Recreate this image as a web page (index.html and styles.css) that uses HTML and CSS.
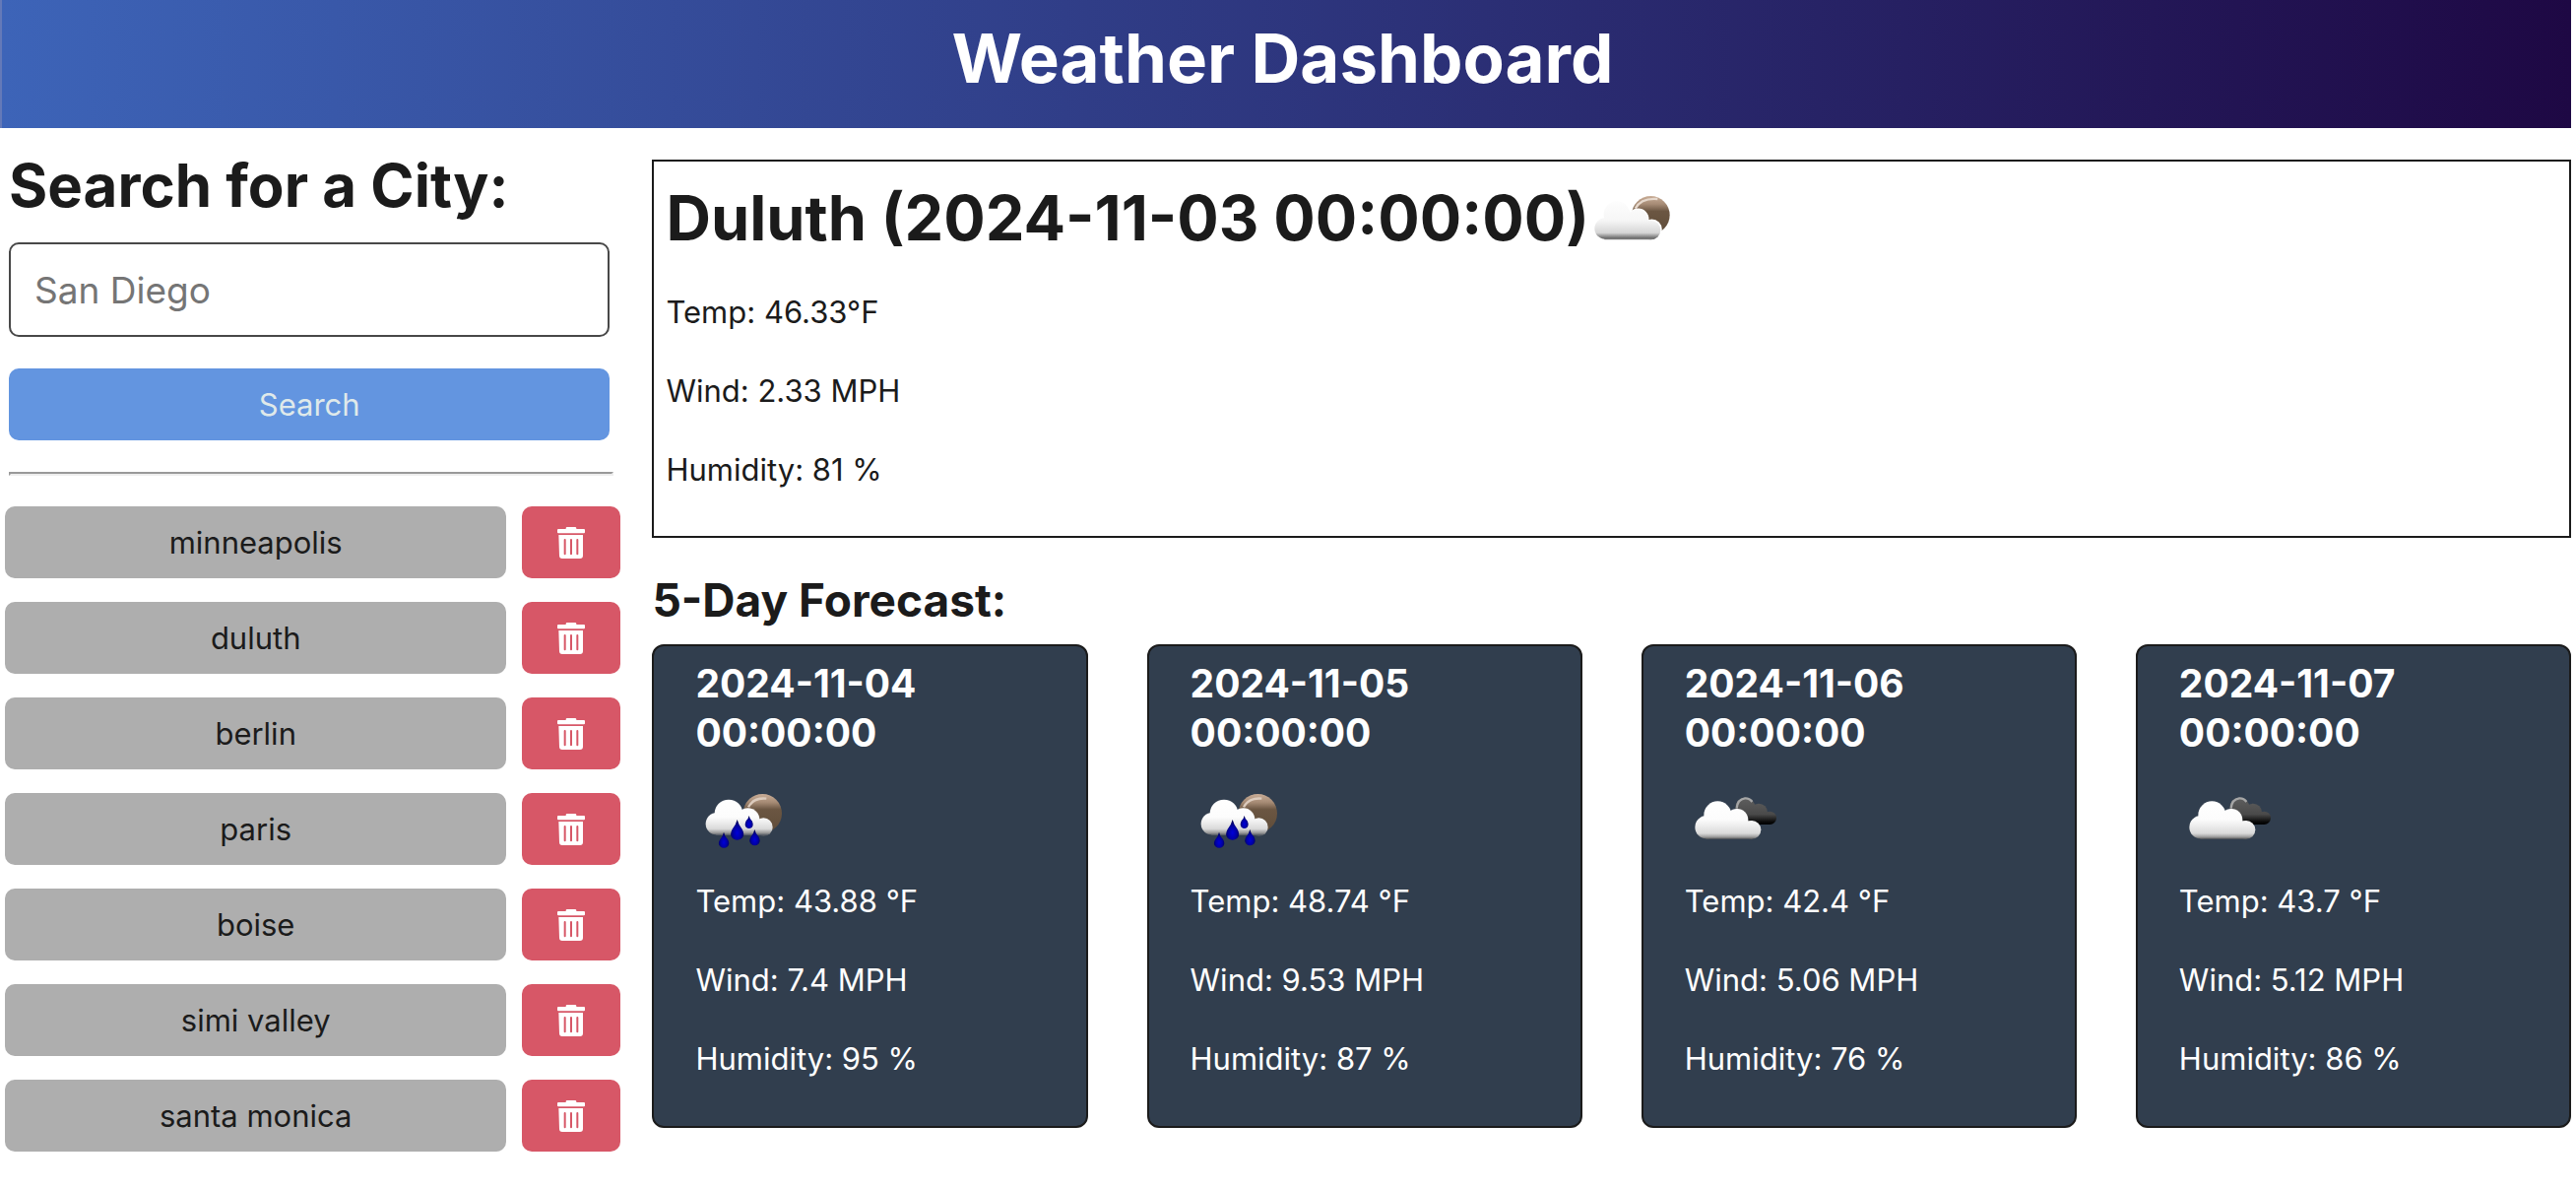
FILE: index.html
```html
<!DOCTYPE html>
<html lang="en">
<head>
<meta charset="utf-8">
<meta name="viewport" content="width=device-width, initial-scale=1">
<title>Weather Dashboard</title>
<link rel="stylesheet" href="styles.css">
</head>
<body>
<svg class="sprite" width="0" height="0" aria-hidden="true">
  <defs>
    <linearGradient id="cloud-fill" gradientUnits="userSpaceOnUse" x1="0" y1="96" x2="0" y2="216">
      <stop offset="0" stop-color="#fff"/><stop offset=".5" stop-color="#fcfcfc"/><stop offset=".85" stop-color="#dadada"/><stop offset=".93" stop-color="#a5a5a5"/><stop offset="1" stop-color="#555"/>
    </linearGradient>
    <linearGradient id="low-cloud-fill" gradientUnits="userSpaceOnUse" x1="0" y1="130" x2="0" y2="247">
      <stop offset="0" stop-color="#fdfdfd"/><stop offset=".5" stop-color="#f6f6f6"/><stop offset=".82" stop-color="#d6d6d6"/><stop offset=".9" stop-color="#999"/><stop offset=".97" stop-color="#666"/><stop offset="1" stop-color="#aaa"/>
    </linearGradient>
    <linearGradient id="rain-cloud-fill" gradientUnits="userSpaceOnUse" x1="0" y1="94" x2="0" y2="204">
      <stop offset="0" stop-color="#fff"/><stop offset=".5" stop-color="#fcfcfc"/><stop offset=".82" stop-color="#dadada"/><stop offset=".93" stop-color="#999"/><stop offset="1" stop-color="#4d545e"/>
    </linearGradient>
    <linearGradient id="moon-fill" x1="0" y1="0" x2="0" y2="1">
      <stop offset="0" stop-color="#c9ad97"/><stop offset=".22" stop-color="#a58a74"/><stop offset=".4" stop-color="#6b5642"/><stop offset="1" stop-color="#5f4c39"/>
    </linearGradient>
    <linearGradient id="dark-fill" gradientUnits="userSpaceOnUse" x1="0" y1="95" x2="0" y2="170">
      <stop offset="0" stop-color="#5c5c5c"/><stop offset=".6" stop-color="#4a4a4a"/><stop offset=".9" stop-color="#0a0a0a"/><stop offset="1" stop-color="#000"/>
    </linearGradient>
    <radialGradient id="drop-fill" cx=".5" cy=".65" r=".6">
      <stop offset="0" stop-color="#0000d8"/><stop offset=".5" stop-color="#0000a8"/><stop offset="1" stop-color="#00004c"/>
    </radialGradient>
  </defs>
  <symbol id="trash" viewBox="137 105 84 96">
    <path fill="#fff" fill-rule="evenodd" d="M140 111h23v-2q0-4 4-4h24q4 0 4 4v2h23q3 0 3 3v7q0 3-3 3h-78q-3 0-3-3v-7q0-3 3-3zM141 129h74v63q0 9-9 9h-54q-9 0-9-9zM157 144v43q0 3 3 3t3-3v-43q0-3-3-3t-3 3zM176 144v43q0 3 3 3t3-3v-43q0-3-3-3t-3 3zM195 144v43q0 3 3 3t3-3v-43q0-3-3-3t-3 3z"/>
  </symbol>
  <symbol id="few-clouds" viewBox="24 60 300 240">
    <circle cx="229" cy="172" r="58" fill="url(#moon-fill)"/>
    <path d="M182 152Q200 119 250 123" fill="none" stroke="#e6d8cc" stroke-width="7"/>
    <g fill="#fff" stroke="#fff" stroke-width="7">
      <circle cx="191" cy="184" r="29"/><circle cx="232" cy="216" r="28"/>
    </g>
    <g fill="url(#low-cloud-fill)">
      <circle cx="90" cy="213" r="32"/><circle cx="126" cy="170" r="40"/><circle cx="188" cy="187" r="32"/><circle cx="230" cy="218" r="29"/>
      <rect x="88" y="187" width="144" height="60"/>
    </g>
  </symbol>
  <symbol id="rain" viewBox="51 0 300 300">
    <circle cx="256" cy="137" r="59" fill="url(#moon-fill)"/>
    <path d="M213 118Q228 88 268 92" fill="none" stroke="#dccbbd" stroke-width="7"/>
    <g fill="url(#rain-cloud-fill)">
      <circle cx="117" cy="169" r="34"/><circle cx="153" cy="138" r="43"/><circle cx="212" cy="156" r="35"/><circle cx="259" cy="179" r="28"/>
      <rect x="115" y="160" width="144" height="44"/>
    </g>
    <g fill="url(#drop-fill)">
      <path d="M215 144Q217 154 224 160Q230 172 224 179Q215 187 206 179Q200 172 206 160Q213 154 215 144z"/>
      <path d="M179 156Q183 172 194 185Q204 202 193 213Q179 223 165 213Q154 202 164 185Q175 172 179 156z"/>
      <path d="M138 194Q141 207 150 216Q158 229 150 238Q138 247 127 238Q118 229 127 216Q135 207 138 194z"/>
      <path d="M232 186Q235 199 244 208Q252 221 244 230Q232 239 221 230Q212 221 221 208Q229 199 232 186z"/>
    </g>
  </symbol>
  <symbol id="broken-clouds" viewBox="33 0 300 300">
    <g fill="url(#dark-fill)">
      <circle cx="217" cy="119" r="30"/><circle cx="258" cy="134" r="27"/><circle cx="292" cy="151" r="20"/>
      <rect x="205" y="134" width="88" height="37"/>
    </g>
    <path d="M191 122Q193 94 216 91Q230 90 238 102" fill="none" stroke="#a6a6a6" stroke-width="7"/>
    <g fill="url(#cloud-fill)">
      <circle cx="99" cy="179" r="35"/><circle cx="133" cy="142" r="42"/><circle cx="192" cy="157" r="34"/><circle cx="237" cy="187" r="28"/>
      <rect x="97" y="160" width="141" height="55"/>
    </g>
  </symbol>
</svg>

<header class="banner"><h1>Weather Dashboard</h1></header>

<div class="page">
  <aside class="sidebar">
    <form class="search">
      <h2><label for="city">Search for a City:</label></h2>
      <input id="city" type="text" placeholder="San Diego">
      <button type="submit" class="btn btn-search">Search</button>
    </form>
    <hr>
    <ul class="history">
      <li><button type="button" class="btn btn-city">minneapolis</button><button type="button" class="btn btn-delete" aria-label="Delete minneapolis"><svg><use href="#trash"/></svg></button></li>
      <li><button type="button" class="btn btn-city">duluth</button><button type="button" class="btn btn-delete" aria-label="Delete duluth"><svg><use href="#trash"/></svg></button></li>
      <li><button type="button" class="btn btn-city">berlin</button><button type="button" class="btn btn-delete" aria-label="Delete berlin"><svg><use href="#trash"/></svg></button></li>
      <li><button type="button" class="btn btn-city">paris</button><button type="button" class="btn btn-delete" aria-label="Delete paris"><svg><use href="#trash"/></svg></button></li>
      <li><button type="button" class="btn btn-city">boise</button><button type="button" class="btn btn-delete" aria-label="Delete boise"><svg><use href="#trash"/></svg></button></li>
      <li><button type="button" class="btn btn-city">simi valley</button><button type="button" class="btn btn-delete" aria-label="Delete simi valley"><svg><use href="#trash"/></svg></button></li>
      <li><button type="button" class="btn btn-city">santa monica</button><button type="button" class="btn btn-delete" aria-label="Delete santa monica"><svg><use href="#trash"/></svg></button></li>
    </ul>
  </aside>

  <main class="weather">
    <section class="today">
      <h2>Duluth (2024-11-03 00:00:00)<svg class="today-icon"><use href="#few-clouds"/></svg></h2>
      <p>Temp: 46.33°F</p>
      <p>Wind: 2.33 MPH</p>
      <p>Humidity: 81 %</p>
    </section>

    <h3 class="forecast-title">5-Day Forecast:</h3>
    <section class="forecast">
      <article class="card">
        <h4>2024-11-04 00:00:00</h4>
        <svg class="card-icon"><use href="#rain"/></svg>
        <p>Temp: 43.88 °F</p>
        <p>Wind: 7.4 MPH</p>
        <p>Humidity: 95 %</p>
      </article>
      <article class="card">
        <h4>2024-11-05 00:00:00</h4>
        <svg class="card-icon"><use href="#rain"/></svg>
        <p>Temp: 48.74 °F</p>
        <p>Wind: 9.53 MPH</p>
        <p>Humidity: 87 %</p>
      </article>
      <article class="card">
        <h4>2024-11-06 00:00:00</h4>
        <svg class="card-icon"><use href="#broken-clouds"/></svg>
        <p>Temp: 42.4 °F</p>
        <p>Wind: 5.06 MPH</p>
        <p>Humidity: 76 %</p>
      </article>
      <article class="card">
        <h4>2024-11-07 00:00:00</h4>
        <svg class="card-icon"><use href="#broken-clouds"/></svg>
        <p>Temp: 43.7 °F</p>
        <p>Wind: 5.12 MPH</p>
        <p>Humidity: 86 %</p>
      </article>
    </section>
  </main>
</div>
</body>
</html>
```
FILE: styles.css
```css
* {
  box-sizing: border-box;
}

body {
  margin: 0;
  background: #fff;
  color: #1b1b1b;
  font-family: Inter, "Liberation Sans", sans-serif;
  font-size: 31px;
  line-height: 48px;
}

h1, h2, h3, h4, p, ul {
  margin: 0;
}

.sprite {
  position: absolute;
}

.banner {
  margin-right: 5px;
  padding: 14px 8px 26px 0;
  border-left: 2px solid #6479b8;
  background: linear-gradient(to right, #3d64b8, #1e0844);
  color: #fff;
  text-align: center;
}

.banner h1 {
  font-size: 69px;
  line-height: 90px;
}

.page {
  display: grid;
  grid-template-columns: 24% 1fr;
  gap: 32px;
  padding: 16px 5px 32px;
}

.search {
  display: flex;
  flex-direction: column;
  gap: 32px;
  padding: 2px 11px 0 4px;
}

.search h2 {
  margin-bottom: -14px;
  font-size: 60px;
  line-height: 80px;
}

.search input {
  height: 96px;
  padding: 0 24px;
  border: 2px solid #484848;
  border-radius: 10px;
  background: #fff;
  color: inherit;
  font: inherit;
  font-size: 37px;
}

.search input::placeholder {
  color: #757575;
  opacity: 1;
}

.btn {
  display: flex;
  align-items: center;
  justify-content: center;
  height: 73px;
  padding: 0 16px;
  border: 0;
  border-radius: 10px;
  font: inherit;
}

.btn-search {
  background: #6395e0;
  color: #dfe9ea;
}

.sidebar hr {
  height: 4px;
  margin: 32px 7px 31px 4px;
  border: 2px solid;
  border-color: #999 #eee #eee #999;
}

.history {
  display: flex;
  flex-direction: column;
  gap: 24px;
  padding: 0;
  list-style: none;
}

.history li {
  display: flex;
  gap: 16px;
}

.btn-city {
  flex: 1;
  background: #aeaeae;
  color: #1b1b1b;
}

.btn-delete {
  width: 16%;
  background: #d75767;
}

.btn-delete svg {
  width: 28px;
  height: 32px;
}

.weather {
  padding-top: 16px;
}

.today {
  padding: 17px 12px 11px;
  border: 2px solid #1b1b1b;
}

.today h2 {
  display: flex;
  align-items: center;
  margin-bottom: 32px;
  font-size: 63px;
  line-height: 80px;
}

.today-icon {
  width: 100px;
  height: 80px;
  margin-left: -6px;
}

.today p,
.card p {
  margin-bottom: 32px;
}

.forecast-title {
  margin: 33px 0 15px;
  font-size: 46px;
  line-height: 60px;
}

.forecast {
  display: grid;
  grid-template-columns: repeat(4, 1fr);
  gap: 60px;
}

.card {
  padding: 13px 42px 12px;
  border: 2px solid #1b1b1b;
  border-radius: 12px;
  background: #313e4e;
  color: #fff;
}

.card h4 {
  max-width: 300px;
  font-size: 39px;
  line-height: 50px;
}

.card-icon {
  display: block;
  width: 100px;
  height: 100px;
  margin: 11px 0;
}
```
